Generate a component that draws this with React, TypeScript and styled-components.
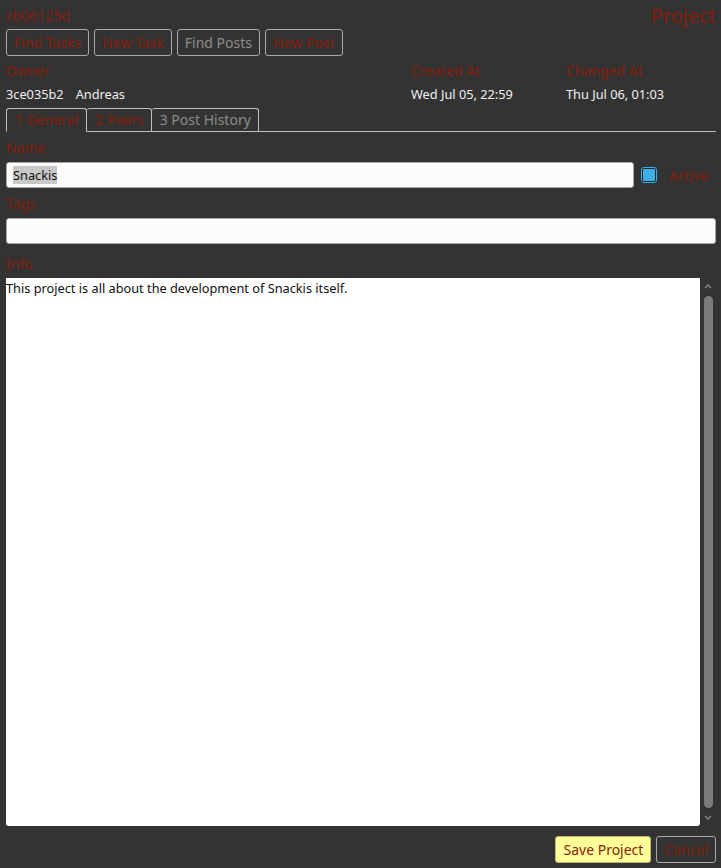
import React from "react";
import styled, { createGlobalStyle } from "styled-components";

const RED = "#861d0b";

const Global = createGlobalStyle`
  html, body { margin: 0; padding: 0; background: #333333; }
  body { font-family: "Noto Sans", "Open Sans", sans-serif; }
  * { box-sizing: border-box; }
`;

const Page = styled.div`
  height: 868px;
  padding: 4px 5px 5px 6px;
  display: flex;
  flex-direction: column;
  background: #333333;
  color: #eeeeee;
`;

const Header = styled.div`
  display: flex;
  justify-content: space-between;
  align-items: flex-start;
  height: 25px;
`;

const Id = styled.div`
  color: ${RED};
  font-size: 14px;
  line-height: 24px;
`;

const Title = styled.div`
  color: ${RED};
  font-size: 20px;
  line-height: 24px;
`;

const Toolbar = styled.div`
  display: flex;
  gap: 5px;
`;

const ToolButton = styled.button<{ $disabled?: boolean; $primary?: boolean }>`
  font-family: inherit;
  font-size: 14px;
  height: 27px;
  padding: 0 7px;
  border: 1px solid ${(p) => (p.$primary ? "#b8b870" : "#a8a8a8")};
  border-radius: 3px;
  background: ${(p) => (p.$primary ? "#ffff99" : "transparent")};
  color: ${(p) => (p.$disabled ? "#8c8c8c" : RED)};
  cursor: pointer;
`;

const Meta = styled.div`
  display: grid;
  grid-template-columns: 405px 155px 1fr;
  margin-top: 5px;
`;

const Label = styled.div`
  color: ${RED};
  font-size: 14px;
  line-height: 20px;
`;

const Value = styled.div`
  font-size: 12.75px;
  line-height: 20px;
  margin-top: 3px;
  color: #f0f0f0;
  white-space: pre;
  display: flex;
  gap: 12px;
`;

const Tabs = styled.div`
  display: flex;
  margin-top: 4px;
  border-bottom: 1px solid #bfbfbf;
  height: 24px;
`;

const Tab = styled.div<{ $active?: boolean; $muted?: boolean }>`
  height: ${(p) => (p.$active ? "24px" : "23px")};
  padding: ${(p) => (p.$active ? "0 8px" : "0 7px 0 8px")};
  border: 1px solid #bfbfbf;
  border-bottom: ${(p) => (p.$active ? "1px solid #333333" : "none")};
  border-left: ${(p) => (p.$active ? "1px solid #bfbfbf" : "none")};
  border-radius: 3px 3px 0 0;
  font-size: 14px;
  line-height: 22px;
  color: ${(p) => (p.$muted ? "#8c8c8c" : RED)};
  margin-bottom: -1px;
`;

const Body = styled.div`
  flex: 1;
  display: flex;
  flex-direction: column;
  padding-top: 6px;
  min-height: 0;
`;

const NameRow = styled.div`
  display: flex;
  align-items: center;
  margin-top: 4px;
`;

const Field = styled.div`
  height: 26px;
  border: 1px solid #a8a8a8;
  border-radius: 3px;
  background: #fcfcfc;
  color: #111;
  font-size: 12.75px;
  display: flex;
  align-items: center;
  padding: 0 6px;
  flex: 1;
`;

const Selection = styled.span`
  background: #c8c8c8;
  line-height: 18px;
`;

const Check = styled.div`
  width: 16px;
  height: 16px;
  margin-left: 7px;
  border: 1px solid #3daee9;
  border-radius: 3px;
  background: #232629;
  padding: 1px;
  display: flex;
`;

const CheckFill = styled.div`
  flex: 1;
  background: #3daee9;
  border-radius: 1px;
`;

const CheckLabel = styled.div`
  color: ${RED};
  font-size: 14px;
  margin-left: 12px;
  width: 47px;
`;

const SectionLabel = styled(Label)<{ $gap?: number }>`
  margin-top: ${(p) => p.$gap ?? 4}px;
`;

const TagsField = styled(Field)`
  flex: none;
  margin-top: 4px;
`;

const InfoRow = styled.div`
  flex: 1;
  display: flex;
  margin-top: 4px;
  min-height: 0;
`;

const InfoArea = styled.div`
  flex: 1;
  background: #ffffff;
  color: #111;
  font-size: 12.75px;
  line-height: 18px;
  padding: 1px 0 0 0;
  border-radius: 0 0 3px 3px;
`;

const ScrollBar = styled.div`
  width: 16px;
  display: flex;
  flex-direction: column;
  align-items: center;
`;

const Arrow = styled.svg`
  width: 10px;
  height: 18px;
  flex: none;
`;

const Thumb = styled.div`
  flex: 1;
  width: 9px;
  background: #7c7c7c;
  border-radius: 5px;
`;

const Footer = styled.div`
  display: flex;
  justify-content: flex-end;
  gap: 5px;
  margin-top: 10px;
`;

export default function App() {
  return (
    <>
      <Global />
      <Page>
        <Header>
          <Id>cb06125d</Id>
          <Title>Project</Title>
        </Header>
        <Toolbar>
          <ToolButton>Find Tasks</ToolButton>
          <ToolButton>New Task</ToolButton>
          <ToolButton $disabled>Find Posts</ToolButton>
          <ToolButton>New Post</ToolButton>
        </Toolbar>
        <Meta>
          <Label>Owner</Label>
          <Label>Created At</Label>
          <Label>Changed At</Label>
          <Value>
            <span>3ce035b2</span>
            <span>Andreas</span>
          </Value>
          <Value>Wed Jul 05, 22:59</Value>
          <Value>Thu Jul 06, 01:03</Value>
        </Meta>
        <Tabs>
          <Tab $active>1 General</Tab>
          <Tab>2 Peers</Tab>
          <Tab $muted>3 Post History</Tab>
        </Tabs>
        <Body>
          <Label>Name</Label>
          <NameRow>
            <Field>
              <Selection>Snackis</Selection>
            </Field>
            <Check>
              <CheckFill />
            </Check>
            <CheckLabel>Active</CheckLabel>
          </NameRow>
          <SectionLabel $gap={6}>Tags</SectionLabel>
          <TagsField />
          <SectionLabel $gap={10}>Info</SectionLabel>
          <InfoRow>
            <InfoArea>This project is all about the development of Snackis itself.</InfoArea>
            <ScrollBar>
              <Arrow viewBox="0 0 10 18">
                <path d="M2 10 L5 7 L8 10" stroke="#8a8a8a" strokeWidth="1.4" fill="none" />
              </Arrow>
              <Thumb />
              <Arrow viewBox="0 0 10 18">
                <path d="M2 8 L5 11 L8 8" stroke="#8a8a8a" strokeWidth="1.4" fill="none" />
              </Arrow>
            </ScrollBar>
          </InfoRow>
          <Footer>
            <ToolButton $primary>Save Project</ToolButton>
            <ToolButton>Cancel</ToolButton>
          </Footer>
        </Body>
      </Page>
    </>
  );
}
